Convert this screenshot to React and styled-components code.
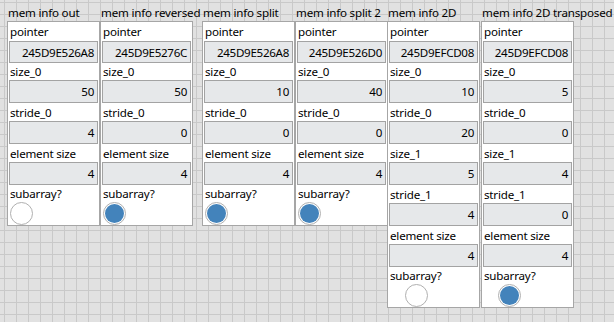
import styled, { createGlobalStyle } from "styled-components";

const Global = createGlobalStyle`
html, body { margin: 0; padding: 0; }
body {
  width: 614px;
  height: 322px;
  overflow: hidden;
  font-family: "Noto Sans", "Open Sans", sans-serif;
  color: #000;
}
`

const panels = [
  { title: "mem info out", gap: 0, fields: [["pointer", "245D9E526A8"], ["size_0", "50"], ["stride_0", "4"], ["element size", "4"]], on: false, indent: 1 },
  { title: "mem info reversed", gap: 0, fields: [["pointer", "245D9E5276C"], ["size_0", "50"], ["stride_0", "0"], ["element size", "4"]], on: true, indent: 1 },
  { title: "mem info split", gap: 9, fields: [["pointer", "245D9E526A8"], ["size_0", "10"], ["stride_0", "0"], ["element size", "4"]], on: true, indent: 1 },
  { title: "mem info split 2", gap: 0, fields: [["pointer", "245D9E526D0"], ["size_0", "40"], ["stride_0", "0"], ["element size", "4"]], on: true, indent: 1 },
  { title: "mem info 2D", gap: -1, fields: [["pointer", "245D9EFCD08"], ["size_0", "10"], ["stride_0", "20"], ["size_1", "5"], ["stride_1", "4"], ["element size", "4"]], on: false, indent: 16 },
  { title: "mem info 2D transposed", gap: 1, fields: [["pointer", "245D9EFCD08"], ["size_0", "5"], ["stride_0", "0"], ["size_1", "4"], ["stride_1", "0"], ["element size", "4"]], on: true, indent: 15 },
]

export default function App() {
  return (
    <>
      <Global />
      <Canvas>
        {panels.map((p) =>
          <Cluster key={p.title} $gap={p.gap}>
            <Title>{p.title}</Title>
            <Panel>
              {p.fields.map(([label, value], i) =>
                <div key={label}>
                  <Label $h={i === 0 ? 19 : i === 1 ? 17 : 18}>{label}</Label>
                  <Field $h={i === 0 ? 22 : 23}>{value}</Field>
                </div>
              )}
              <Label $h={17}>subarray?</Label>
              <Led $on={p.on} $indent={p.indent} />
            </Panel>
          </Cluster>
        )}
      </Canvas>
    </>
  )
}

const Canvas = styled.div`
width: 614px;
height: 322px;
box-sizing: border-box;
padding: 3px 0 0 7px;
display: flex;
align-items: flex-start;
background-color: #e1e1e1;
background-image:
  linear-gradient(to right, #c9c9c9 1px, transparent 1px),
  linear-gradient(to bottom, #c9c9c9 1px, transparent 1px);
background-size: 12px 12px;
background-position: 4px 2px;
`

const Cluster = styled.div`
width: 93px;
flex-shrink: 0;
margin-left: ${(p) => p.$gap}px;
display: flex;
flex-direction: column;
`

const Title = styled.div`
height: 18px;
line-height: 19px;
padding-left: 1px;
font-size: 11.6px;
letter-spacing: -0.2px;
white-space: nowrap;
`

const Panel = styled.div`
box-sizing: border-box;
width: 93px;
background: #fff;
border: 1px solid #a6a6a6;
padding: 0 0 0 1px;
display: flex;
flex-direction: column;
`

const Label = styled.div`
height: ${(p) => p.$h}px;
line-height: ${(p) => p.$h + 1}px;
padding-left: 1px;
font-size: 11.6px;
letter-spacing: -0.2px;
white-space: nowrap;
`

const Field = styled.div`
box-sizing: border-box;
width: 89px;
height: ${(p) => p.$h}px;
line-height: ${(p) => p.$h - 1}px;
border: 1px solid #a3a3a3;
background: #e6e8ea;
text-align: right;
padding-right: 3px;
font-size: 11.6px;
letter-spacing: -0.3px;
`

const Led = styled.div`
box-sizing: border-box;
width: 23px;
height: 23px;
margin-left: ${(p) => p.$indent}px;
border-radius: 50%;
border: 1px solid #b0b0b0;
padding: 1px;
background: ${(p) => p.$on ? "linear-gradient(#4383bb, #4383bb) content-box, #fff" : "#fff"};
`
